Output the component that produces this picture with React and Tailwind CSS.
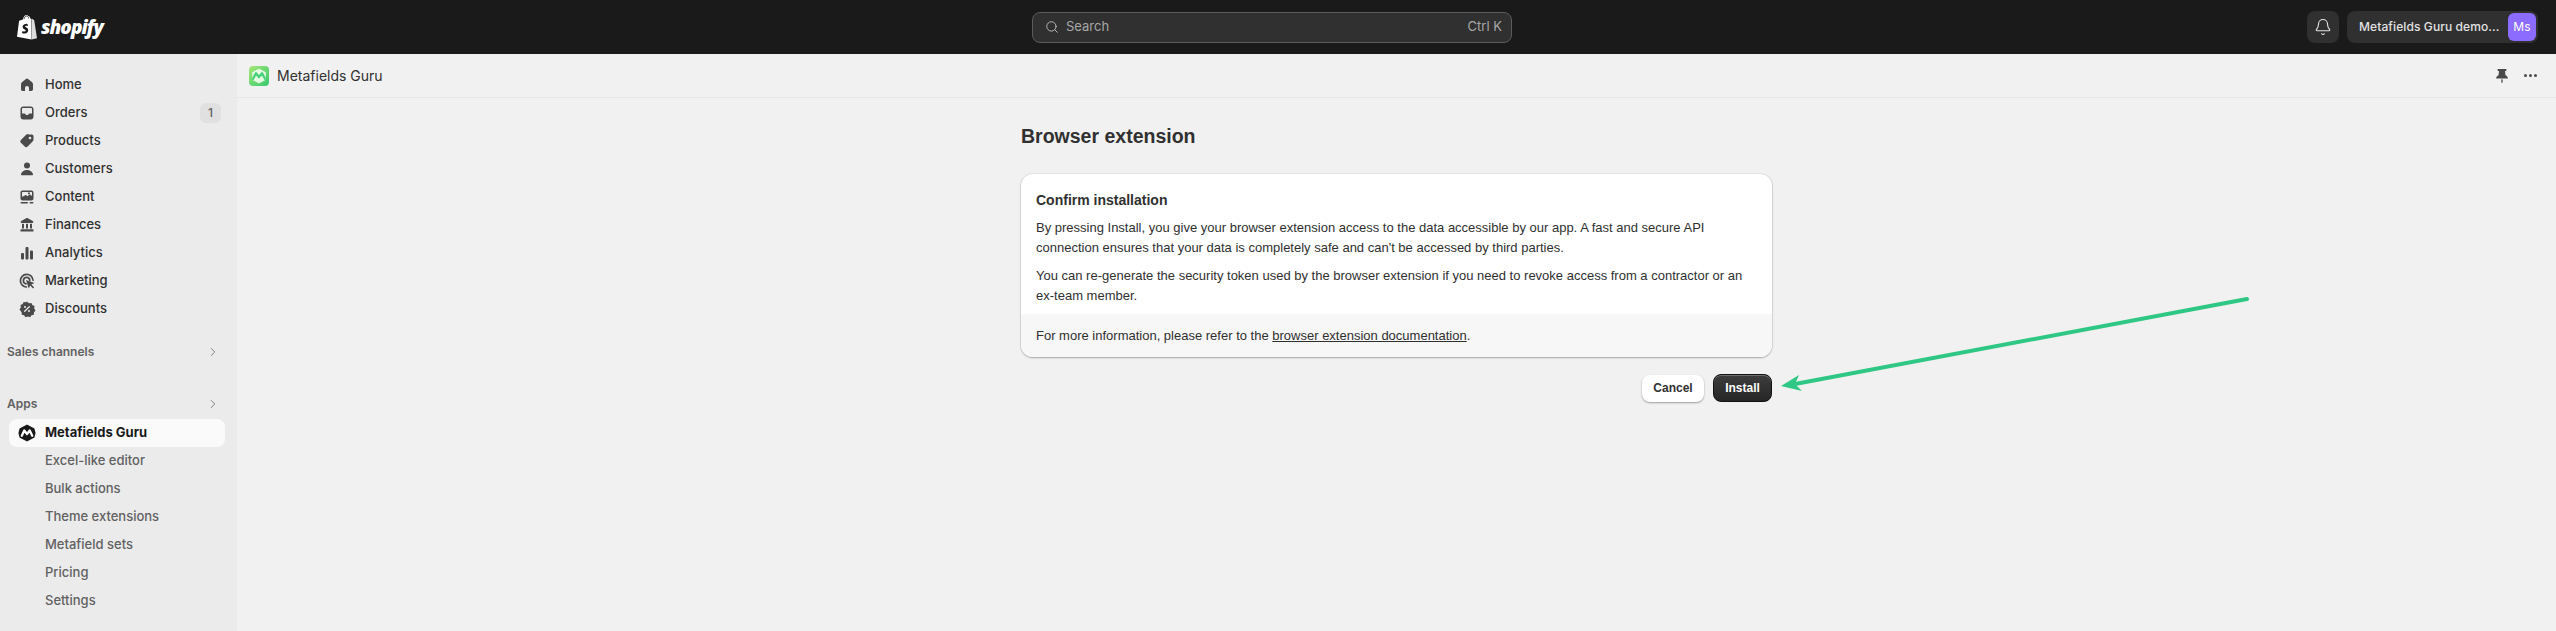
import { Bell, ChevronRight, Search } from 'lucide-react'

const HomeIcon = () => (
  <svg viewBox="0 0 20 20" className="w-5 h-5" fill="#4a4a4a">
    <path d="M8.900 3.900a1.700 1.700 0 0 1 2.200 0l4 3.300c.6.500.9 1.200.9 2v5.100c0 1-.8 1.700-1.700 1.700H12v-3a2 2 0 0 0-4 0v3H5.700c-1 0-1.700-.8-1.700-1.700V9.200c0-.8.300-1.500.9-2l4-3.300Z" />
  </svg>
)

const OrdersIcon = () => (
  <svg viewBox="0 0 20 20" className="w-5 h-5" fill="#4a4a4a">
    <path fillRule="evenodd" d="M6.200 3.500h7.600c1.600 0 2.700 1.200 2.700 2.700v7.600c0 1.600-1.200 2.700-2.700 2.700H6.200c-1.600 0-2.700-1.200-2.700-2.700V6.200c0-1.600 1.200-2.700 2.700-2.700Zm0 1.500c-.7 0-1.200.5-1.200 1.200v4.300h2.400c.6 0 1 .3 1.200.8l.3.700h2.200l.3-.7c.2-.5.600-.8 1.200-.8H15V6.200c0-.7-.5-1.200-1.200-1.200H6.200Z" />
  </svg>
)

const ProductsIcon = () => (
  <svg viewBox="0 0 20 20" className="w-5 h-5" fill="#4a4a4a">
    <path fillRule="evenodd" d="M11.500 3.500h3.300c1 0 1.700.8 1.700 1.700v3.300c0 .8-.3 1.500-.9 2.100l-5 5c-.8.800-2.100.800-2.900 0l-3.800-3.800c-.8-.8-.8-2.100 0-2.900l5-5c.6-.6 1.300-.9 2.100-.9Zm1.500 4.800a1.300 1.300 0 1 0 0-2.600 1.300 1.300 0 0 0 0 2.600Z" />
  </svg>
)

const CustomersIcon = () => (
  <svg viewBox="0 0 20 20" className="w-5 h-5" fill="#4a4a4a">
    <circle cx="10" cy="6.500" r="3" />
    <path d="M10 11c-3.200 0-5.300 1.700-6 4-.2.700.3 1.300 1 1.300h10c.7 0 1.200-.6 1-1.300-.7-2.300-2.800-4-6-4Z" />
  </svg>
)

const ContentIcon = () => (
  <svg viewBox="0 0 20 20" className="w-5 h-5" fill="#4a4a4a">
    <path fillRule="evenodd" d="M5.500 3.500h9c1.100 0 2 .9 2 2v6c0 1.100-.9 2-2 2h-9c-1.100 0-2-.9-2-2v-6c0-1.100.9-2 2-2Zm-.5 6.200V5.500c0-.3.2-.5.500-.5h9c.3 0 .5.200.5.500v3.400l-1.600-1.200c-.4-.3-.9-.3-1.200 0l-1.700 1.500-1.300-.9c-.4-.3-.9-.2-1.200.1L5 9.700Zm7.600-2.700a1 1 0 1 1 0-1.500 1 1 0 0 1 0 1.500Z" />
    <rect x="3.500" y="15" width="7.500" height="1.500" rx=".7" />
    <rect x="12.500" y="15" width="4" height="1.500" rx=".7" />
  </svg>
)

const FinancesIcon = () => (
  <svg viewBox="0 0 20 20" className="w-5 h-5" fill="#4a4a4a">
    <path d="M9.200 3.200c.5-.3 1.100-.3 1.600 0l5 2.800c.9.500.5 1.900-.5 1.900H4.700c-1 0-1.400-1.400-.5-1.900l5-2.800Z" />
    <rect x="5" y="8.800" width="2" height="4.700" />
    <rect x="9" y="8.800" width="2" height="4.700" />
    <rect x="13" y="8.800" width="2" height="4.700" />
    <rect x="3.500" y="14.300" width="13" height="2.200" rx=".6" />
  </svg>
)

const AnalyticsIcon = () => (
  <svg viewBox="0 0 20 20" className="w-5 h-5" fill="#4a4a4a">
    <rect x="4" y="10" width="3" height="6.500" rx="1" />
    <rect x="8.500" y="4" width="3" height="12.500" rx="1" />
    <rect x="13" y="7.500" width="3" height="9" rx="1" />
  </svg>
)

const MarketingIcon = () => (
  <svg viewBox="0 0 20 20" className="w-5 h-5">
    <path d="M9.500 16a6.300 6.300 0 1 1 6.500-6.800" fill="none" stroke="#4a4a4a" strokeWidth="1.700" strokeLinecap="round" />
    <path d="M9 12.800a3.200 3.200 0 1 1 3.800-3.400" fill="none" stroke="#4a4a4a" strokeWidth="1.700" strokeLinecap="round" />
    <path d="M9 9l8.500 3-3.200 1.500 2.800 2.800-1.100 1.100-2.800-2.800L11.800 17.500 9 9Z" fill="#4a4a4a" />
  </svg>
)

const DiscountsIcon = () => (
  <svg viewBox="0 0 20 20" className="w-5 h-5">
    <path d="M10 2.800l2 1.400 2.400-.3.900 2.200 2.200 1-.3 2.400 1.300 2-1.500 1.800-.2 2.400-2.300.6-1.400 2-2.300-.8-2.300.8-1.400-2-2.300-.6-.2-2.400L2.500 10.500l1.300-2-.3-2.400 2.200-1 .9-2.200 2.400.3 2-1.400Z" fill="#4a4a4a" />
    <path d="M12.300 7.700l-4.600 4.600" stroke="#ebebeb" strokeWidth="1.300" strokeLinecap="round" />
    <circle cx="8" cy="8" r="1" fill="#ebebeb" />
    <circle cx="12" cy="12" r="1" fill="#ebebeb" />
  </svg>
)

const PinIcon = () => (
  <svg viewBox="0 0 20 20" className="w-5 h-5" fill="#4a4a4a">
    <path d="M6.500 3h7c.6 0 1 .4 1 1s-.4 1-1 1H13l.5 4.200c1.300.6 2.300 1.700 2.500 3.300H4c.2-1.600 1.200-2.700 2.500-3.300L7 5h-.5c-.6 0-1-.4-1-1s.4-1 1-1Z" />
    <path d="M9.200 13.500h1.600l-.3 3c-.1.700-.9.700-1 0l-.3-3Z" />
  </svg>
)

const ShopifyBag = () => (
  <svg viewBox="0 0 20 25" className="w-5 h-[25px]">
    <path d="M13.500 3.800 12.800 2c-.3-.7-1-1.100-1.700-1-.3-.6-1-1-1.700-.9C7.300.3 6.200 3 5.800 4.600L3 5.500c-.8.200-.9.300-1 1L0 21.700 14.500 24.500V3.700l-1 .1Z" fill="#fff" />
    <path d="M15 3.700 14.700 24.500 20 23.200 17.200 5.200c0-.2-.2-.3-.3-.3l-1.900-1.200Z" fill="#dcdcdc" />
    <path d="M7 4.200c.4-1.500 1.200-2.800 2.300-3.200.6-.1 1 .2 1.200.7M10.800 1.500c.5.400.8 1.200.8 1.900" fill="none" stroke="#1a1a1a" strokeWidth=".8" />
    <path d="M10.600 9.200c-.6-.3-1.300-.4-1.900-.3-1.900.1-3 1.500-3.100 2.900-.1 2.500 3.200 2.600 3.100 3.800 0 .6-.6.900-1.300.9-1 0-1.900-.6-1.900-.6l-.6 2c.8.500 1.800.7 2.900.7 2.100-.1 3.400-1.600 3.400-3.500 0-2.500-3.100-2.800-3-3.600 0-.3.300-.7 1.100-.7.700 0 1.400.3 1.600.3l-.3-1.900Z" fill="#1a1a1a" />
  </svg>
)

const AppLogo = () => (
  <svg viewBox="0 0 20 20" className="w-5 h-5">
    <defs>
      <linearGradient id="guru" x1="0" y1="0" x2="1" y2="1">
        <stop offset="0" stopColor="#a6e878" />
        <stop offset="1" stopColor="#34c96f" />
      </linearGradient>
    </defs>
    <rect width="20" height="20" rx="4" fill="url(#guru)" />
    <path d="M10 2.500 16.800 6.300v7.400L10 17.500 3.200 13.700V6.300Z" fill="#e6fae2" />
    <path d="M4 12.800 7 7.200 10 11 13 7.200 16 12.800" fill="none" stroke="#46d27c" strokeWidth="2.300" strokeLinejoin="round" strokeLinecap="round" />
  </svg>
)

const GuruNavIcon = () => (
  <svg viewBox="0 0 20 20" className="w-5 h-5">
    <path d="M10 2.300 16.700 5.800 17.800 10 16.700 14.200 10 17.700 3.300 14.200 2.200 10 3.300 5.800Z" fill="#1a1a1a" stroke="#1a1a1a" strokeWidth="1.500" strokeLinejoin="round" />
    <path d="M4.800 12.800 7.300 7.500 10 11 12.700 7.500 15.200 12.800" fill="none" stroke="#fff" strokeWidth="2.300" strokeLinejoin="round" strokeLinecap="round" />
  </svg>
)

const mainNav = [
  { label: 'Home', icon: HomeIcon },
  { label: 'Orders', icon: OrdersIcon, badge: '1' },
  { label: 'Products', icon: ProductsIcon },
  { label: 'Customers', icon: CustomersIcon },
  { label: 'Content', icon: ContentIcon },
  { label: 'Finances', icon: FinancesIcon },
  { label: 'Analytics', icon: AnalyticsIcon },
  { label: 'Marketing', icon: MarketingIcon },
  { label: 'Discounts', icon: DiscountsIcon },
]

const appNav = ['Excel-like editor', 'Bulk actions', 'Theme extensions', 'Metafield sets', 'Pricing', 'Settings']

const NavRow = ({ label, icon: Icon, badge }) => (
  <div className="h-7 flex items-center pl-[17px] pr-4 text-[13px] font-[550] text-[#303030]">
    <span className="w-7 flex shrink-0"><Icon /></span>
    <span className="flex-1">{label}</span>
    {badge && (
      <span className="w-[21px] h-5 rounded-md bg-[#e0e0e0] text-[#616161] text-xs flex items-center justify-center">{badge}</span>
    )}
  </div>
)

const SectionRow = ({ label, className }) => (
  <div className={`h-7 flex items-center justify-between pl-[7px] pr-[17px] text-xs font-semibold text-[#616161] ${className}`}>
    <span>{label}</span>
    <ChevronRight className="w-3.5 h-3.5 text-[#707070]" strokeWidth={1.5} />
  </div>
)

const Sidebar = () => (
  <aside className="w-[237px] shrink-0 bg-[#ebebeb] pt-[17px]">
    {mainNav.map((item) => <NavRow key={item.label} {...item} />)}
    <SectionRow label="Sales channels" className="mt-[15px]" />
    <SectionRow label="Apps" className="mt-6" />
    <div className="h-7 w-[216px] mt-px ml-[9px] pl-2 flex items-center rounded-lg bg-[#fafafa] text-[13px] font-bold text-[#1a1a1a]">
      <span className="w-7 flex shrink-0"><GuruNavIcon /></span>
      Metafields Guru
    </div>
    {appNav.map((label) => (
      <div key={label} className="h-7 flex items-center pl-[45px] text-[13px] font-[450] text-[#616161]">{label}</div>
    ))}
  </aside>
)

const TopBar = () => (
  <header className="h-[54px] shrink-0 bg-[#1a1a1a] flex items-center relative px-[17px]">
    <div className="flex items-center gap-1 w-[1015px]">
      <ShopifyBag />
      <span className="font-['Open_Sans',sans-serif] italic font-extrabold text-[19px] tracking-[-1px] text-white leading-none">shopify</span>
    </div>
    <div className="w-[480px] h-[31px] rounded-lg border border-[#5c5c5c] bg-[#303030] flex items-center pl-3 pr-[9px] text-[13px] text-[#a8a8a8]">
      <Search className="w-3.5 h-3.5 mr-[7px] text-[#b5b5b5]" strokeWidth={1.7} />
      <span className="flex-1">Search</span>
      <span>Ctrl K</span>
    </div>
    <div className="ml-auto mr-px flex items-center gap-2">
      <button className="w-8 h-8 rounded-lg bg-[#303030] flex items-center justify-center text-[#e3e3e3]">
        <Bell className="w-[18px] h-[18px]" strokeWidth={1.5} />
      </button>
      <button className="w-[191px] h-8 rounded-lg bg-[#303030] flex items-center justify-between pl-3 pr-0.5 text-xs font-[450] tracking-[0.1px] text-[#e3e3e3] whitespace-nowrap">
        <span>Metafields Guru demo...</span>
        <span className="w-7 h-7 rounded-md bg-[#8c6cff] text-white text-xs font-normal flex items-center justify-center">Ms</span>
      </button>
    </div>
  </header>
)

const AppHeader = () => (
  <div className="h-11 shrink-0 border-b border-[#e6e6e6] flex items-center pl-3 pr-4 text-sm text-[#303030]">
    <AppLogo />
    <span className="ml-2 flex-1">Metafields Guru</span>
    <PinIcon />
    <span className="ml-2 w-5 flex items-center justify-center gap-0.5">
      <i className="w-[3px] h-[3px] rounded-full bg-[#4a4a4a]" />
      <i className="w-[3px] h-[3px] rounded-full bg-[#4a4a4a]" />
      <i className="w-[3px] h-[3px] rounded-full bg-[#4a4a4a]" />
    </span>
  </div>
)

const InstallPanel = () => (
  <section className="w-[751px] mx-auto pt-6 font-['Liberation_Sans',Arial,sans-serif] text-[#303030]">
    <h1 className="text-[19.5px] leading-7 font-bold">Browser extension</h1>
    <div className="mt-6 rounded-xl bg-white overflow-hidden shadow-[0_1px_2px_rgba(0,0,0,0.28),0_0_0_1px_rgba(0,0,0,0.05)] text-[13px] leading-5">
      <div className="px-[15px] pt-4 pb-2">
        <h2 className="text-sm leading-5 font-bold mb-2">Confirm installation</h2>
        <p className="mb-2">By pressing Install, you give your browser extension access to the data accessible by our app. A fast and secure API connection ensures that your data is completely safe and can't be accessed by third parties.</p>
        <p>You can re-generate the security token used by the browser extension if you need to revoke access from a contractor or an ex-team member.</p>
      </div>
      <div className="bg-[#f7f7f7] px-[15px] pt-3 pb-[11px]">
        For more information, please refer to the <a className="underline">browser extension documentation</a>.
      </div>
    </div>
    <div className="mt-[17px] flex justify-end items-center gap-[9px] text-xs font-bold">
      <button className="w-[62px] h-[27px] rounded-lg bg-white text-[#303030] shadow-[0_1px_2px_rgba(0,0,0,0.35)]">Cancel</button>
      <button className="w-[59px] h-7 rounded-lg border border-[#111] bg-gradient-to-b from-[#3d3d3d] to-[#262626] text-white shadow-[inset_0_1px_0_rgba(255,255,255,0.25)]">Install</button>
    </div>
  </section>
)

const Arrow = () => (
  <svg className="absolute left-0 top-0 w-[2556px] h-[631px] pointer-events-none" viewBox="0 0 2556 631">
    <path d="M2247 299 1795 384" stroke="#2ec783" strokeWidth="4" strokeLinecap="round" fill="none" />
    <path d="M1781 386 1799 375 1795 384 1802 391Z" fill="#2ec783" />
  </svg>
)

export default function App() {
  return (
    <div className="relative h-[631px] overflow-hidden flex flex-col bg-[#f1f1f1] font-[Inter,sans-serif]">
      <TopBar />
      <div className="flex flex-1 min-h-0">
        <Sidebar />
        <main className="flex-1 min-w-0">
          <AppHeader />
          <InstallPanel />
        </main>
      </div>
      <Arrow />
    </div>
  )
}
